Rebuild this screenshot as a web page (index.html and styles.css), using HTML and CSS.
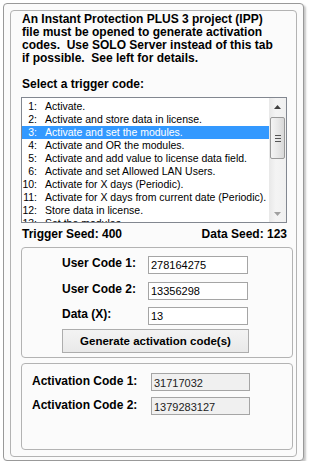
FILE: index.html
```html
<!DOCTYPE html>
<html lang="en">
<head>
    <meta charset="UTF-8">
    <meta name="viewport" content="width=device-width, initial-scale=1.0">
    <title>Activation Codes</title>
    <link rel="stylesheet" href="styles.css">
</head>
<body>

<div class="panel">
    <div class="group">
        <p class="intro">An Instant Protection PLUS 3 project (IPP)<br>file must be opened to generate activation<br>codes.&nbsp; Use SOLO Server instead of this tab<br>if possible.&nbsp; See left for details.<br><br>Select a trigger code:</p>

        <div class="listbox">
            <ul class="items">
                <li><span class="num">1:</span>Activate.</li>
                <li><span class="num">2:</span>Activate and store data in license.</li>
                <li class="selected"><span class="num">3:</span>Activate and set the modules.</li>
                <li><span class="num">4:</span>Activate and OR the modules.</li>
                <li><span class="num">5:</span>Activate and add value to license data field.</li>
                <li><span class="num">6:</span>Activate and set Allowed LAN Users.</li>
                <li><span class="num">10:</span>Activate for X days (Periodic).</li>
                <li><span class="num">11:</span>Activate for X days from current date (Periodic).</li>
                <li><span class="num">12:</span>Store data in license.</li>
                <li><span class="num">13:</span>Set the modules.</li>
            </ul>
            <div class="scrollbar">
                <div class="arrow">
                    <svg width="7" height="4" viewBox="0 0 7 4"><path d="M0 4 L3.5 0 L7 4 Z" fill="#404040"/></svg>
                </div>
                <div class="thumb">
                    <span class="grip"></span>
                    <span class="grip"></span>
                    <span class="grip"></span>
                </div>
                <div class="spacer"></div>
                <div class="arrow">
                    <svg width="7" height="4" viewBox="0 0 7 4"><path d="M0 0 L3.5 4 L7 0 Z" fill="#a0a0a0"/></svg>
                </div>
            </div>
        </div>

        <div class="seeds">
            <span>Trigger Seed: 400</span>
            <span>Data Seed: 123</span>
        </div>

        <div class="box codes">
            <div class="row">
                <label for="code1">User Code 1:</label>
                <input type="text" id="code1" value="278164275">
            </div>
            <div class="row">
                <label for="code2">User Code 2:</label>
                <input type="text" id="code2" value="13356298">
            </div>
            <div class="row">
                <label for="data">Data (X):</label>
                <input type="text" id="data" value="13">
            </div>
            <button class="generate">Generate activation code(s)</button>
        </div>

        <div class="box results">
            <div class="row">
                <label>Activation Code 1:</label>
                <div class="output">31717032</div>
            </div>
            <div class="row">
                <label>Activation Code 2:</label>
                <div class="output">1379283127</div>
            </div>
        </div>
    </div>
</div>

</body>
</html>
```

FILE: styles.css
```css
* {
    margin: 0;
    padding: 0;
    box-sizing: border-box;
}

body {
    font-family: 'Liberation Sans', Arial, sans-serif;
    background: #fff;
    color: #000;
}

.panel {
    margin: 3px 0 0 3px;
    width: 301px;
    height: 458px;
    padding: 6px;
    border: 1px solid #999;
    border-radius: 4px;
    background: #fbfbfb;
    box-shadow: 2px 2px 2px rgba(0, 0, 0, 0.22);
}

.group {
    height: 447px;
    padding: 2px 0 0 10px;
    border: 1px solid #b3b3b3;
    border-radius: 4px;
}

.intro {
    font-size: 12px;
    font-weight: bold;
    line-height: 13px;
    padding-left: 1px;
    white-space: nowrap;
}

/* list of trigger codes */
.listbox {
    display: flex;
    width: 266px;
    height: 126px;
    margin-top: 6px;
    border: 1px solid #828790;
    background: #fff;
}

.items {
    flex: 1;
    list-style: none;
    padding-top: 2px;
    overflow: hidden;
    font-size: 10.5px;
    line-height: 13px;
    white-space: nowrap;
}

.items li {
    height: 13px;
}

.items .num {
    display: inline-block;
    width: 15px;
    margin-right: 8px;
    text-align: right;
}

.items .selected {
    background: #3399ff;
    color: #fff;
}

.scrollbar {
    width: 17px;
    display: flex;
    flex-direction: column;
    background: linear-gradient(to right, #e8e8e8, #f4f4f4 40%, #f0f0f0);
}

.arrow {
    height: 17px;
    display: flex;
    align-items: center;
    justify-content: center;
}

.thumb {
    width: 15px;
    height: 42px;
    margin: 2px 0 0 1px;
    border: 1px solid #9a9a9a;
    border-radius: 2px;
    background: linear-gradient(to right, #f4f4f4, #e8e8e8 50%, #d8d8d8);
    display: flex;
    flex-direction: column;
    align-items: center;
    justify-content: center;
    gap: 2px;
}

.grip {
    display: block;
    width: 6px;
    height: 1px;
    background: #555;
}

.spacer {
    flex: 1;
}

.seeds {
    display: flex;
    justify-content: space-between;
    width: 266px;
    margin-top: 5px;
    padding-left: 1px;
    font-size: 12px;
    font-weight: bold;
    line-height: 13px;
}

/* group boxes */
.box {
    width: 272px;
    border: 1px solid #b3b3b3;
    border-radius: 4px;
}

.row {
    display: flex;
    align-items: flex-start;
}

.row label {
    font-size: 12px;
    font-weight: bold;
    line-height: 13px;
    margin-top: 1px;
}

.codes {
    height: 111px;
    margin-top: 6px;
    padding: 8px 0 0 40px;
}

.codes label {
    width: 86px;
}

.codes .row + .row {
    margin-top: 8px;
}

.codes .row:nth-child(3) {
    margin-top: 7px;
}

.codes input {
    width: 100px;
    height: 18px;
    padding: 0 2px;
    border: 1px solid #a5a5a5;
    background: #fff;
    font-family: 'Liberation Sans', Arial, sans-serif;
    font-size: 11px;
    color: #000;
    outline: none;
}

.generate {
    display: block;
    width: 187px;
    height: 24px;
    margin-top: 4px;
    border: 1px solid #adadad;
    background: linear-gradient(#f3f3f3, #e9e9e9);
    font-family: 'Liberation Sans', Arial, sans-serif;
    font-size: 11.5px;
    font-weight: bold;
    color: #000;
    cursor: pointer;
}

.results {
    height: 87px;
    margin-top: 5px;
    padding: 9px 0 0 10px;
}

.results label {
    width: 119px;
    margin-top: 2px;
}

.results .row + .row {
    margin-top: 6px;
}

.output {
    width: 99px;
    height: 18px;
    padding: 2px 2px 0;
    border: 1px solid #a5a5a5;
    background: #f0f0f0;
    font-size: 11px;
    line-height: 14px;
    color: #222;
}
```
